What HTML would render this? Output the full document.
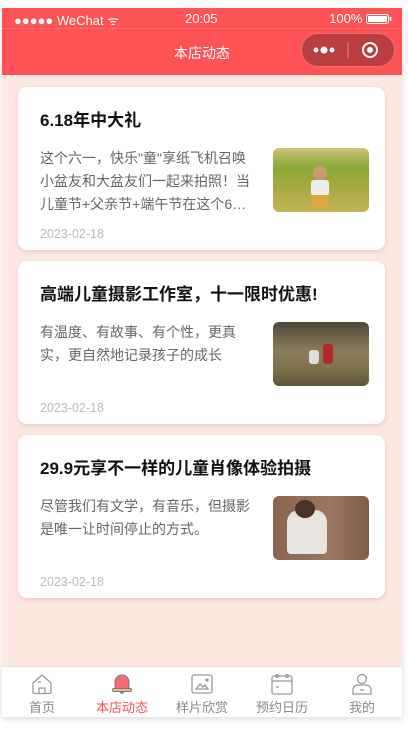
<!DOCTYPE html>
<html><head><meta charset="utf-8"><style>
*{margin:0;padding:0;box-sizing:border-box}
body{width:408px;height:729px;background:#fff;font-family:"Liberation Sans","Noto Sans CJK SC",sans-serif;position:relative;overflow:hidden}
.phone{position:absolute;left:2px;top:8px;width:400px;height:709px;background:#fde8e2;overflow:hidden;box-shadow:0 2px 6px rgba(0,0,0,.15)}
.hdr{position:absolute;left:0;top:0;width:400px;height:67px;background:#ff5254;color:#fff}
.sb{position:absolute;top:0;left:0;width:400px;height:21px;border-bottom:1px solid #ff6a6a;font-size:13px}
.sb .l{position:absolute;left:12px;top:3px}
.sb .c{position:absolute;left:183px;top:3px;font-size:13px}
.sb .r{position:absolute;right:10px;top:3px}
.title{position:absolute;top:35px;width:400px;text-align:center;font-size:14px}
.cap{position:absolute;left:299px;top:25px;width:94px;height:34px;border-radius:17px;background:#bb3d3e;border:1px solid #d77}
.card{position:absolute;left:16px;width:367px;height:163px;background:#fff;border-radius:9px;box-shadow:0 2px 5px rgba(180,120,110,.25)}
.card h3{position:absolute;left:22px;top:19px;font-size:17px;font-weight:bold;color:#111}
.card p{position:absolute;left:22px;top:60px;width:222px;font-size:14px;line-height:23px;color:#666;overflow:hidden;max-height:69px}
.card p.n{width:214px}
.card .d{position:absolute;left:22px;top:140px;font-size:12.5px;color:#bbb}
.card .im{position:absolute;left:255px;top:61px;width:96px;height:64px;border-radius:6px;overflow:hidden}
.tab{position:absolute;left:0;top:658px;width:400px;height:51px;background:#fff;border-top:1px solid #e8dcd8}
.t{position:absolute;top:0;width:80px;text-align:center;font-size:13px;color:#888}
.t svg{display:block;margin:5px auto 0}
.t span{display:block;margin-top:1px}
</style></head><body>
<div class="phone">
<div class="hdr">
<div class="sb"><span class="l">●●●●● WeChat ᯤ</span><span class="c">20:05</span><span class="r">100% <svg width="26" height="10" style="vertical-align:-1px"><rect x="0.5" y="0.5" width="22" height="9" rx="2" fill="none" stroke="#fff"/><rect x="2" y="2" width="19" height="6" fill="#fff"/><rect x="23.5" y="3" width="2" height="4" fill="#fff"/></svg></span></div>
<div class="title">本店动态</div>
<div class="cap"><svg width="94" height="34" style="position:absolute;left:-1px;top:-1px"><circle cx="15" cy="17" r="2.5" fill="#fff"/><circle cx="23" cy="17" r="3.5" fill="#fff"/><circle cx="31" cy="17" r="2.5" fill="#fff"/><line x1="47" y1="9" x2="47" y2="25" stroke="#d88" stroke-width="1"/><circle cx="69" cy="17" r="7" fill="none" stroke="#fff" stroke-width="2"/><circle cx="69" cy="17" r="3" fill="#fff"/></svg></div>
</div>

<div class="card" style="top:79px"><h3>6.18年中大礼</h3><p class="n">这个六一，快乐"童"享纸飞机召唤小盆友和大盆友们一起来拍照！当儿童节+父亲节+端午节在这个6…</p>
<div class="im" style="background:linear-gradient(180deg,#cfc27a 0%,#8aa83a 30%,#a7a840 60%,#c3b45a 100%)"><div style="position:absolute;left:40px;top:18px;width:14px;height:14px;border-radius:50%;background:#c89b74"></div><div style="position:absolute;left:38px;top:32px;width:18px;height:16px;background:#eee;border-radius:3px"></div><div style="position:absolute;left:39px;top:47px;width:16px;height:14px;background:#e0a83a"></div></div>
<div class="d">2023-02-18</div></div>

<div class="card" style="top:253px"><h3>高端儿童摄影工作室，十一限时优惠!</h3><p>有温度、有故事、有个性，更真实，更自然地记录孩子的成长</p>
<div class="im" style="background:linear-gradient(180deg,#4f4636 0%,#8a7d5e 45%,#7d7047 75%,#5e553c 100%)"><div style="position:absolute;left:50px;top:22px;width:10px;height:20px;background:#b42a2a;border-radius:3px"></div><div style="position:absolute;left:36px;top:28px;width:10px;height:14px;background:#ddd;border-radius:3px"></div></div>
<div class="d">2023-02-18</div></div>

<div class="card" style="top:427px"><h3>29.9元享不一样的儿童肖像体验拍摄</h3><p>尽管我们有文学，有音乐，但摄影是唯一让时间停止的方式。</p>
<div class="im" style="background:linear-gradient(90deg,#8a6551,#9b7560 60%,#7f5d4a)"><div style="position:absolute;left:14px;top:14px;width:40px;height:44px;background:#e8e4e0;border-radius:12px 12px 4px 4px"></div><div style="position:absolute;left:22px;top:4px;width:20px;height:18px;background:#4a3226;border-radius:50%"></div></div>
<div class="d">2023-02-18</div></div>

<div class="tab">
<div class="t" style="left:0"><svg width="24" height="24" viewBox="0 0 24 24" fill="none" stroke="#999" stroke-width="1.3"><path d="M3 11 L12 3 L21 11 V20 a1.5 1.5 0 0 1-1.5 1.5 H4.5 A1.5 1.5 0 0 1 3 20 Z"/><path d="M9 21.5 V16 h6 v5.5"/><path d="M8 10 h3"/></svg><span>首页</span></div>
<div class="t" style="left:80px;color:#ff5254"><svg width="24" height="24" viewBox="0 0 24 24"><path d="M5 17 V10 a7 7 0 0 1 14 0 V17 Z" fill="#f66b74" stroke="#777" stroke-width="1"/><rect x="2.5" y="16.5" width="19" height="3" rx="1.5" fill="#f4b57a" stroke="#777" stroke-width="1"/><path d="M10 20 a2 2 0 0 0 4 0" fill="#5a9bb0"/></svg><span>本店动态</span></div>
<div class="t" style="left:160px"><svg width="24" height="24" viewBox="0 0 24 24" fill="none" stroke="#999" stroke-width="1.3"><rect x="2" y="3" width="20" height="18" rx="2"/><path d="M6 17 L10 12 L13 15 L15 13 L18 17 Z"/><circle cx="17" cy="8" r="1" fill="#999"/></svg><span>样片欣赏</span></div>
<div class="t" style="left:240px"><svg width="24" height="24" viewBox="0 0 24 24" fill="none" stroke="#999" stroke-width="1.3"><rect x="2" y="4" width="20" height="18" rx="2"/><path d="M2 9 H22"/><circle cx="7" cy="4" r="1.3" fill="#b8d08a"/><circle cx="17" cy="4" r="1.3" fill="#b8d08a"/><path d="M6 15 h3"/></svg><span>预约日历</span></div>
<div class="t" style="left:320px"><svg width="24" height="24" viewBox="0 0 24 24" fill="none" stroke="#999" stroke-width="1.3"><circle cx="12" cy="7" r="4.5"/><path d="M3 22 V18 a5 5 0 0 1 5-5 H16 a5 5 0 0 1 5 5 V22 Z"/><path d="M10 18 h4"/></svg><span>我的</span></div>
</div>
</div>
</body></html>
